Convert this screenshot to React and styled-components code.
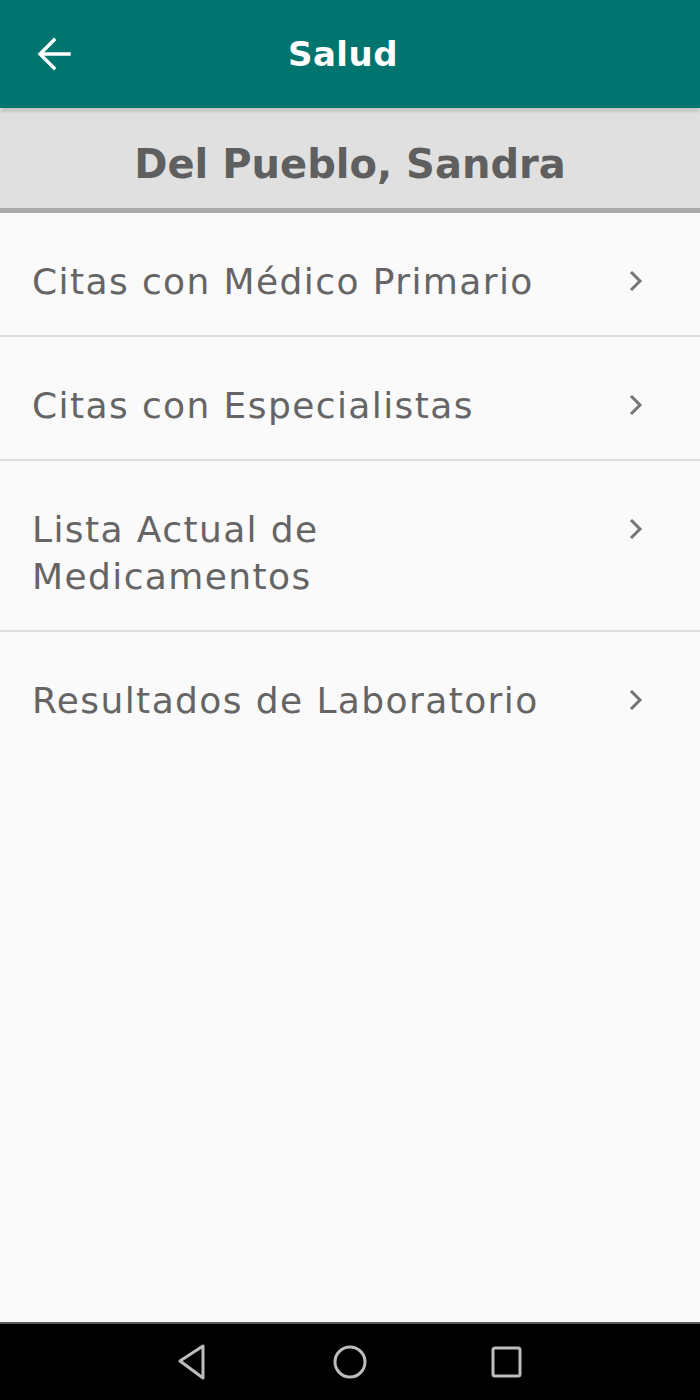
import React from "react";
import styled, { createGlobalStyle } from "styled-components";

const GlobalStyle = createGlobalStyle`
  html, body {
    margin: 0;
    padding: 0;
    background: #fafafa;
  }
  body {
    font-family: "DejaVu Sans", "Open Sans", sans-serif;
  }
`;

const items = [
  "Citas con Médico Primario",
  "Citas con Especialistas",
  "Lista Actual de Medicamentos",
  "Resultados de Laboratorio",
];

function BackArrow() {
  return (
    <svg width="34" height="34" viewBox="0 0 34 34" fill="none">
      <path
        d="M32 17H4M17 3L3 17L17 31"
        stroke="#ffffff"
        strokeWidth="3.4"
        strokeLinecap="square"
        strokeLinejoin="miter"
      />
    </svg>
  );
}

function Chevron() {
  return (
    <svg width="16" height="24" viewBox="0 0 16 24" fill="none">
      <path d="M3 3L12 12L3 21" stroke="#757575" strokeWidth="3" />
    </svg>
  );
}

export default function App() {
  return (
    <Screen>
      <GlobalStyle />
      <TopBar>
        <IconButton aria-label="back">
          <BackArrow />
        </IconButton>
        <BarTitle>Salud</BarTitle>
      </TopBar>
      <PatientBand>
        <PatientName>Del Pueblo, Sandra</PatientName>
      </PatientBand>
      <List>
        {items.map((label) => (
          <Row key={label}>
            <RowLabel wrap={label.startsWith("Lista")}>{label}</RowLabel>
            <ChevronBox>
              <Chevron />
            </ChevronBox>
          </Row>
        ))}
      </List>
      <NavBar>
        <svg width="34" height="40" viewBox="0 0 34 40" fill="none">
          <path
            d="M27 4L4 19L27 36Z"
            stroke="#bdbdbd"
            strokeWidth="3"
            strokeLinejoin="round"
          />
        </svg>
        <svg width="36" height="36" viewBox="0 0 36 36" fill="none">
          <circle cx="18" cy="18" r="15" stroke="#bdbdbd" strokeWidth="3" />
        </svg>
        <svg width="34" height="34" viewBox="0 0 34 34" fill="none">
          <rect
            x="3"
            y="3"
            width="27"
            height="28"
            rx="2"
            stroke="#bdbdbd"
            strokeWidth="3"
          />
        </svg>
      </NavBar>
    </Screen>
  );
}

const Screen = styled.div`
  width: 700px;
  height: 1400px;
  display: flex;
  flex-direction: column;
  background: #fafafa;
  overflow: hidden;
`;

const TopBar = styled.header`
  position: relative;
  z-index: 2;
  height: 108px;
  flex-shrink: 0;
  display: flex;
  align-items: center;
  justify-content: center;
  background: #00756f;
  box-shadow: 0 2px 4px rgba(0, 0, 0, 0.3);
`;

const IconButton = styled.button`
  position: absolute;
  left: 37px;
  top: 37px;
  padding: 0;
  border: none;
  background: none;
  display: flex;
`;

const BarTitle = styled.h1`
  margin: 0 0 0 -14px;
  color: #ffffff;
  font-size: 34px;
  font-weight: 700;
  letter-spacing: 0.5px;
`;

const PatientBand = styled.div`
  height: 98px;
  flex-shrink: 0;
  display: flex;
  align-items: center;
  justify-content: center;
  background: #e0e0e0;
  border-bottom: 5px solid #aaaaaa;
  margin-top: 2px;
`;

const PatientName = styled.h2`
  margin: 0;
  padding-top: 10px;
  color: #5f5f5f;
  font-size: 40px;
  font-weight: 700;
`;

const List = styled.ul`
  flex: 1;
  margin: 0;
  padding: 0;
  list-style: none;
`;

const Row = styled.li`
  display: flex;
  align-items: flex-start;
  justify-content: space-between;
  padding: 45px 56px 30px 32px;
  border-bottom: 2px solid #dedede;

  &:last-child {
    border-bottom: none;
  }
`;

const RowLabel = styled.span`
  max-width: ${(props) => (props.wrap ? "340px" : "560px")};
  color: #656565;
  font-size: 36px;
  line-height: 47px;
  letter-spacing: 1.4px;
`;

const ChevronBox = styled.span`
  display: flex;
  padding-top: 11px;
`;

const NavBar = styled.nav`
  height: 76px;
  flex-shrink: 0;
  display: flex;
  align-items: center;
  justify-content: center;
  gap: 122px;
  background: #000000;
  border-top: 2px solid #5a5a5a;
`;
